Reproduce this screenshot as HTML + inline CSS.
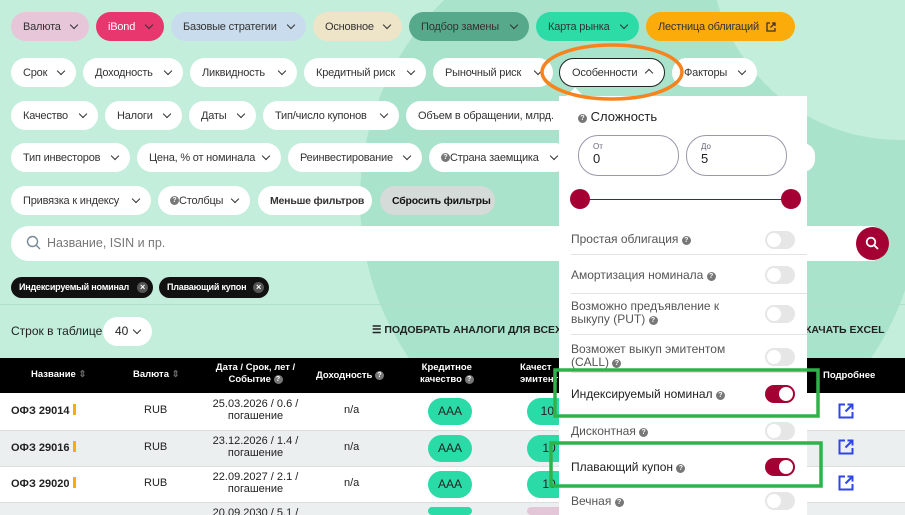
<!DOCTYPE html>
<html><head><meta charset="utf-8"><style>
*{box-sizing:border-box;margin:0;padding:0}
html,body{width:905px;height:515px;overflow:hidden}
body{position:relative;background:#c3eedc;font-family:"Liberation Sans",sans-serif;font-size:12px;color:#222}
.a{position:absolute}
.b{position:absolute;height:29px;border-radius:15px;background:#fff;display:flex;align-items:center;padding-left:12px;font-size:11px;letter-spacing:-.2px;color:#333;white-space:nowrap;overflow:hidden}
.b .c{position:absolute;right:12px;top:10px;width:6px;height:6px;border-right:1.3px solid #333;border-bottom:1.3px solid #333;transform:rotate(45deg)}
.q{display:inline-block;width:9px;height:9px;border-radius:50%;background:#777;color:#fff;font-size:7px;text-align:center;line-height:9px;font-weight:bold;vertical-align:1px;letter-spacing:0}
.tg{position:absolute;width:30px;height:18px;border-radius:9px;background:#e6e6e6;right:12px}
.tg::after{content:"";position:absolute;left:2px;top:2px;width:14px;height:14px;border-radius:50%;background:#fff}
.tg.on{background:#a50034}.tg.on::after{left:14px}
.it{position:absolute;left:12px;right:0;font-size:12px;color:#555;border-bottom:1px solid #e3e3e3}
.row{position:absolute;left:0;width:905px;font-size:12px}
.pill{position:absolute;width:44px;height:27px;border-radius:14px;background:#2adba8;text-align:center;line-height:27px;font-size:12px;overflow:hidden}
.lk{position:absolute;left:838px}
.chip{position:absolute;top:277px;height:21px;border-radius:11px;background:#111;color:#fff;font-size:9px;letter-spacing:-.2px;font-weight:bold;line-height:21px;padding-left:8px;white-space:nowrap}
.chip i{position:absolute;right:5px;top:5px;width:11px;height:11px;border-radius:50%;background:#555;color:#fff;font-style:normal;font-size:9px;line-height:11px;text-align:center}
</style></head><body>
<div class="a" style="left:360px;top:-80px;width:560px;height:560px;border-radius:50%;background:#a9e3cb"></div>
<div class="a" style="left:710px;top:-240px;width:380px;height:380px;border-radius:50%;background:#c3eedc"></div>

<div class="b" style="left:11px;top:12px;width:78px;background:#e6c6d8">Валюта<i class="c"></i></div>
<div class="b" style="left:96px;top:12px;width:68px;background:#e8366e;color:#fff">iBond<i class="c"></i></div>
<div class="b" style="left:171px;top:12px;width:135px;background:#c9dced">Базовые стратегии<i class="c"></i></div>
<div class="b" style="left:313px;top:12px;width:89px;background:#eee4c8">Основное<i class="c"></i></div>
<div class="b" style="left:409px;top:12px;width:120px;background:#57a98c">Подбор замены<i class="c"></i></div>
<div class="b" style="left:536px;top:12px;width:103px;background:#2ddba7">Карта рынка<i class="c"></i></div>
<div class="b" style="left:646px;top:12px;width:149px;background:#fbab0a">Лестница облигаций <svg style="margin-left:7px" width="10" height="10" viewBox="0 0 10 10"><path d="M4 1H1v8h8V6M6 1h3v3M9 1L4.5 5.5" fill="none" stroke="#333" stroke-width="1.3"/></svg></div>

<div class="b" style="left:11px;top:58px;width:65px">Срок<i class="c"></i></div>
<div class="b" style="left:83px;top:58px;width:100px">Доходность<i class="c"></i></div>
<div class="b" style="left:190px;top:58px;width:107px">Ликвидность<i class="c"></i></div>
<div class="b" style="left:304px;top:58px;width:122px">Кредитный риск<i class="c"></i></div>
<div class="b" style="left:433px;top:58px;width:120px">Рыночный риск<i class="c"></i></div>
<div class="b" style="left:559px;top:58px;width:106px;border:1.5px solid #222">Особенности<i class="c" style="transform:rotate(225deg);top:11px"></i></div>
<div class="b" style="left:672px;top:58px;width:85px">Факторы<i class="c"></i></div>

<div class="b" style="left:11px;top:101px;width:87px">Качество<i class="c"></i></div>
<div class="b" style="left:105px;top:101px;width:77px">Налоги<i class="c"></i></div>
<div class="b" style="left:189px;top:101px;width:67px">Даты<i class="c"></i></div>
<div class="b" style="left:263px;top:101px;width:136px">Тип/число купонов<i class="c"></i></div>
<div class="b" style="left:406px;top:101px;width:170px">Объем в обращении, млрд.</div>

<div class="b" style="left:11px;top:143px;width:119px">Тип инвесторов<i class="c"></i></div>
<div class="b" style="left:137px;top:143px;width:144px">Цена, % от номинала<i class="c"></i></div>
<div class="b" style="left:288px;top:143px;width:134px">Реинвестирование<i class="c"></i></div>
<div class="b" style="left:429px;top:143px;width:140px"><span class="q">?</span>Страна заемщика<i class="c"></i></div>
<div class="b" style="left:790px;top:143px;width:25px"></div>

<div class="b" style="left:11px;top:186px;width:140px">Привязка к индексу<i class="c"></i></div>
<div class="b" style="left:158px;top:186px;width:92px"><span class="q">?</span>Столбцы<i class="c"></i></div>
<div class="b" style="left:258px;top:186px;width:114px;font-weight:bold;font-size:10.5px">Меньше фильтров</div>
<div class="b" style="left:380px;top:186px;width:115px;background:#d5dbd9;font-weight:bold;color:#111;font-size:10.5px">Сбросить фильтры</div>

<div class="a" style="left:11px;top:226px;width:877px;height:35px;border-radius:18px;background:#fff"></div>
<svg class="a" style="left:26px;top:235px" width="16" height="16" viewBox="0 0 16 16"><circle cx="6.5" cy="6.5" r="5" fill="none" stroke="#789" stroke-width="1.4"/><path d="M10.2 10.2L14 14" stroke="#789" stroke-width="1.4"/></svg>
<div class="a" style="left:47px;top:236px;font-size:12.5px;color:#777">Название, ISIN и пр.</div>
<div class="a" style="left:856px;top:227px;width:33px;height:33px;border-radius:50%;background:#a50034"></div>
<svg class="a" style="left:865px;top:236px" width="15" height="15" viewBox="0 0 15 15"><circle cx="6" cy="6" r="4.3" fill="none" stroke="#fff" stroke-width="1.8"/><path d="M9.2 9.2L13 13" stroke="#fff" stroke-width="1.8"/></svg>

<div class="chip" style="left:11px;width:142px">Индексируемый номинал<i>×</i></div>
<div class="chip" style="left:159px;width:110px">Плавающий купон<i>×</i></div>
<div class="a" style="left:0;top:304px;width:905px;height:1px;background:#aee0c9"></div>

<div class="a" style="left:11px;top:324px;font-size:12px">Строк в таблице</div>
<div class="a" style="left:103px;top:317px;width:49px;height:29px;border-radius:15px;background:#fff;padding:7px 0 0 12px;font-size:12px">40</div>
<div class="a" style="left:134px;top:327px;width:6px;height:6px;border-right:1.3px solid #333;border-bottom:1.3px solid #333;transform:rotate(45deg)"></div>
<div class="a" style="left:372px;top:324px;font-size:10.5px;font-weight:bold;white-space:nowrap">☰ ПОДОБРАТЬ АНАЛОГИ ДЛЯ ВСЕХ</div>
<div class="a" style="left:805px;top:324px;font-size:10.5px;font-weight:bold">КАЧАТЬ EXCEL</div>

<div class="a" style="left:0;top:358px;width:905px;height:35px;background:#000;color:#fff;font-size:9.5px;font-weight:bold">
<span class="a" style="left:31px;top:11px">Название <span style="color:#666">⇕</span></span>
<span class="a" style="left:133px;top:11px">Валюта <span style="color:#666">⇕</span></span>
<span class="a" style="left:208px;top:4px;width:95px;text-align:center;line-height:12px">Дата / Срок, лет /<br>Событие <span class="q">?</span></span>
<span class="a" style="left:316px;top:12px">Доходность <span class="q">?</span></span>
<span class="a" style="left:420px;top:4px;text-align:center;line-height:12px">Кредитное<br>качество <span class="q">?</span></span>
<span class="a" style="left:520px;top:4px;line-height:12px">Качест<br>эмитент</span>
<span class="a" style="left:823px;top:12px">Подробнее</span>
</div>

<div class="row" style="top:393px;height:37px;background:#fff"></div>
<div class="row" style="top:430px;height:36px;background:#ecefef;border-top:1px solid #ddd"></div>
<div class="row" style="top:466px;height:36px;background:#fff;border-top:1px solid #ddd"></div>
<div class="row" style="top:502px;height:13px;background:#ecefef;border-top:1px solid #ddd"></div>

<div class="a" style="left:11px;top:404px;font-weight:bold;font-size:11px">ОФЗ 29014 <span style="display:inline-block;width:3px;height:11px;background:#fbab0a;vertical-align:-1px"></span></div>
<div class="a" style="left:11px;top:441px;font-weight:bold;font-size:11px">ОФЗ 29016 <span style="display:inline-block;width:3px;height:11px;background:#fbab0a;vertical-align:-1px"></span></div>
<div class="a" style="left:11px;top:477px;font-weight:bold;font-size:11px">ОФЗ 29020 <span style="display:inline-block;width:3px;height:11px;background:#fbab0a;vertical-align:-1px"></span></div>
<div class="a" style="left:144px;top:404px;font-size:11px">RUB</div>
<div class="a" style="left:144px;top:441px;font-size:11px">RUB</div>
<div class="a" style="left:144px;top:477px;font-size:11px">RUB</div>
<div class="a" style="left:208px;top:398px;width:95px;font-size:11px;text-align:center;line-height:12px">25.03.2026 / 0.6 /<br>погашение</div>
<div class="a" style="left:208px;top:435px;width:95px;font-size:11px;text-align:center;line-height:12px">23.12.2026 / 1.4 /<br>погашение</div>
<div class="a" style="left:208px;top:471px;width:95px;font-size:11px;text-align:center;line-height:12px">22.09.2027 / 2.1 /<br>погашение</div>
<div class="a" style="left:208px;top:507px;width:95px;font-size:11px;text-align:center">20.09.2030 / 5.1 /</div>
<div class="a" style="left:344px;top:404px;font-size:11px">n/a</div>
<div class="a" style="left:344px;top:441px;font-size:11px">n/a</div>
<div class="a" style="left:344px;top:477px;font-size:11px">n/a</div>
<div class="pill" style="left:428px;top:398px">AAA</div>
<div class="pill" style="left:428px;top:435px">AAA</div>
<div class="pill" style="left:428px;top:471px">AAA</div>
<div class="pill" style="left:428px;top:507px;height:8px"></div>
<div class="pill" style="left:527px;top:398px">10.</div>
<div class="pill" style="left:527px;top:435px">10</div>
<div class="pill" style="left:527px;top:471px">10</div>
<div class="pill" style="left:527px;top:507px;height:8px;background:#e3c6d8"></div>
<svg class="lk" style="top:403px" width="16" height="16" viewBox="0 0 16 16"><path d="M7 1.5H1.5v13h13V9M9.5 1.5h5v5M14.5 1.5L7.5 8.5" fill="none" stroke="#2f45e8" stroke-width="2"/></svg>
<svg class="lk" style="top:439px" width="16" height="16" viewBox="0 0 16 16"><path d="M7 1.5H1.5v13h13V9M9.5 1.5h5v5M14.5 1.5L7.5 8.5" fill="none" stroke="#2f45e8" stroke-width="2"/></svg>
<svg class="lk" style="top:475px" width="16" height="16" viewBox="0 0 16 16"><path d="M7 1.5H1.5v13h13V9M9.5 1.5h5v5M14.5 1.5L7.5 8.5" fill="none" stroke="#2f45e8" stroke-width="2"/></svg>

<div class="a" style="left:569px;top:90px;width:12px;height:12px;background:#fff;transform:rotate(45deg)"></div>
<div class="a" style="left:559px;top:96px;width:248px;height:419px;background:#fff;overflow:hidden">
<div class="a" style="left:19px;top:13px;font-size:13px;color:#222"><span class="q">?</span> Сложность</div>
<div class="a" style="left:19px;top:39px;width:101px;height:41px;border:1px solid #99a;border-radius:20px;padding:6px 0 0 14px;font-size:8px;color:#667">От<div style="font-size:13px;color:#222">0</div></div>
<div class="a" style="left:127px;top:39px;width:101px;height:41px;border:1px solid #99a;border-radius:20px;padding:6px 0 0 14px;font-size:8px;color:#667">До<div style="font-size:13px;color:#222">5</div></div>
<div class="a" style="left:20px;top:103px;width:212px;height:1px;background:#a50034"></div>
<div class="a" style="left:11px;top:93px;width:20px;height:20px;border-radius:50%;background:#a50034"></div>
<div class="a" style="left:222px;top:93px;width:20px;height:20px;border-radius:50%;background:#a50034"></div>
<div class="it" style="top:126px;height:33px;padding-top:10px">Простая облигация <span class="q">?</span><i class="tg" style="top:9px"></i></div>
<div class="it" style="top:159px;height:39px;padding-top:13px">Амортизация номинала <span class="q">?</span><i class="tg" style="top:11px"></i></div>
<div class="it" style="top:198px;height:41px;padding-top:6px;line-height:13px">Возможно предъявление к<br>выкупу (PUT) <span class="q">?</span><i class="tg" style="top:11px"></i></div>
<div class="it" style="top:239px;height:38px;padding-top:8px;line-height:13px">Возможет выкуп эмитентом<br>(CALL) <span class="q">?</span><i class="tg" style="top:13px"></i></div>
<div class="it" style="top:277px;height:44px;padding-top:14px;color:#222;border:0">Индексируемый номинал <span class="q">?</span><i class="tg on" style="top:12px"></i></div>
<div class="it" style="top:321px;height:30px;padding-top:7px;border:0">Дисконтная <span class="q">?</span><i class="tg" style="top:5px"></i></div>
<div class="it" style="top:351px;height:43px;padding-top:13px;color:#222;border:0">Плавающий купон <span class="q">?</span><i class="tg on" style="top:11px"></i></div>
<div class="it" style="top:394px;height:30px;padding-top:4px;border:0">Вечная <span class="q">?</span><i class="tg" style="top:2px"></i></div>
</div>

<svg class="a" style="left:0;top:0" width="905" height="515">
<ellipse cx="612" cy="72" rx="70" ry="27" fill="none" stroke="#f7831f" stroke-width="3.5"/>
<rect x="555" y="370" width="263" height="46" fill="none" stroke="#2eb34b" stroke-width="3.5"/>
<rect x="551" y="443" width="270" height="43" fill="none" stroke="#2eb34b" stroke-width="3.5"/>
</svg>
</body></html>
